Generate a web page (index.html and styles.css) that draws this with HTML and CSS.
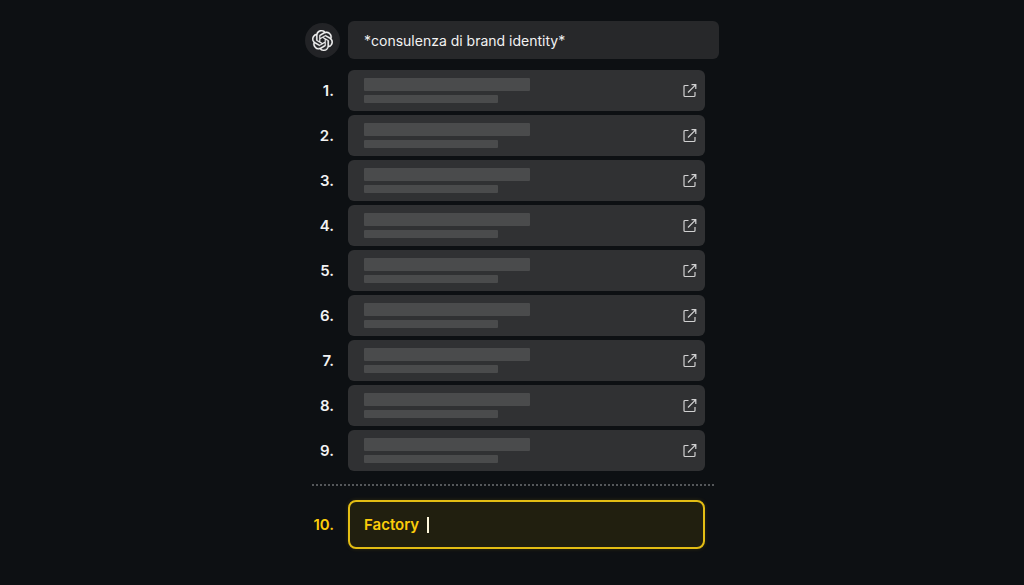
FILE: index.html
```
<!DOCTYPE html>
<html lang="it">
<head>
    <meta charset="UTF-8">
    <meta name="viewport" content="width=device-width, initial-scale=1.0">
    <title>Brand ranking</title>
    <link rel="stylesheet" href="styles.css">
</head>
<body>
    <!-- Shared icons -->
    <svg class="icon-defs" aria-hidden="true">
        <symbol id="icon-open" viewBox="0 0 14 14">
            <path d="M5.5 1.5H2Q1 1.5 1 2.5V11.5Q1 12.5 2 12.5H11Q12 12.5 12 11.5V8M8.5 .7H12.8V5M12.8 .7L5 8.5" fill="none" stroke="currentColor" stroke-width="1.2"/>
        </symbol>
    </svg>

    <main class="container">
        <!-- Search query -->
        <div class="search">
            <div class="logo">
                <svg viewBox="0 0 24 24" role="img" aria-label="ChatGPT">
                    <path fill="currentColor" stroke="currentColor" stroke-width="0.3" d="M22.2819 9.8211a5.9847 5.9847 0 0 0-.5157-4.9108 6.0462 6.0462 0 0 0-6.5098-2.9A6.0651 6.0651 0 0 0 4.9807 4.1818a5.9847 5.9847 0 0 0-3.9977 2.9 6.0462 6.0462 0 0 0 .7427 7.0966 5.98 5.98 0 0 0 .511 4.9107 6.051 6.051 0 0 0 6.5146 2.9001A5.9847 5.9847 0 0 0 13.2599 24a6.0557 6.0557 0 0 0 5.7718-4.2058 5.9894 5.9894 0 0 0 3.9977-2.9001 6.0557 6.0557 0 0 0-.7475-7.073zm-9.022 12.6081a4.4755 4.4755 0 0 1-2.8764-1.0408l.1419-.0804 4.7783-2.7582a.7948.7948 0 0 0 .3927-.6813v-6.7369l2.02 1.1686a.071.071 0 0 1 .038.052v5.5826a4.504 4.504 0 0 1-4.4945 4.4944zm-9.6607-4.1254a4.4708 4.4708 0 0 1-.5346-3.0137l.142.0852 4.783 2.7582a.7712.7712 0 0 0 .7806 0l5.8428-3.3685v2.3324a.0804.0804 0 0 1-.0332.0615L9.74 19.9502a4.4992 4.4992 0 0 1-6.1408-1.6464zM2.3408 7.8956a4.485 4.485 0 0 1 2.3655-1.9728V11.6a.7664.7664 0 0 0 .3879.6765l5.8144 3.3543-2.0201 1.1685a.0757.0757 0 0 1-.071 0l-4.8303-2.7865A4.504 4.504 0 0 1 2.3408 7.872zm16.5963 3.8558L13.1038 8.364 15.1192 7.2a.0757.0757 0 0 1 .071 0l4.8303 2.7913a4.4944 4.4944 0 0 1-.6765 8.1042v-5.6772a.79.79 0 0 0-.407-.667zm2.0107-3.0231l-.142-.0852-4.7735-2.7818a.7759.7759 0 0 0-.7854 0L9.409 9.2297V6.8974a.0662.0662 0 0 1 .0284-.0615l4.8303-2.7866a4.4992 4.4992 0 0 1 6.6802 4.66zM8.3065 12.863l-2.02-1.1638a.0804.0804 0 0 1-.038-.0567V6.0742a4.4992 4.4992 0 0 1 7.3757-3.4537l-.142.0805L8.704 5.459a.7948.7948 0 0 0-.3927.6813zm1.0976-2.3654l2.602-1.4998 2.6069 1.4998v2.9994l-2.5974 1.4997-2.6067-1.4997Z"/>
                </svg>
            </div>
            <input class="query" type="text" value="*consulenza di brand identity*" aria-label="Ricerca">
        </div>

        <!-- Results -->
        <ol class="results" id="results"></ol>

        <!-- Highlighted brand -->
        <div class="row featured">
            <span class="number">10.</span>
            <div class="brand">Factory<span class="caret"></span></div>
        </div>
    </main>

    <script>
        const results = document.getElementById("results");

        for (let i = 1; i <= 9; i++) {
            const row = document.createElement("li");
            row.className = "row";
            row.innerHTML = `
                <span class="number">${i}.</span>
                <div class="card">
                    <div class="lines">
                        <div class="line title"></div>
                        <div class="line subtitle"></div>
                    </div>
                    <a class="open" href="#" aria-label="Apri risultato ${i}">
                        <svg><use href="#icon-open"></use></svg>
                    </a>
                </div>
            `;
            results.appendChild(row);
        }
    </script>
</body>
</html>
```

FILE: styles.css
```
/* General styles */
* {
    box-sizing: border-box;
}
body {
    font-family: Inter, "Liberation Sans", sans-serif;
    font-size: 15px;
    background-color: #0d1013;
    color: #f2f2f2;
    margin: 0;
}
.icon-defs {
    display: none;
}
.container {
    max-width: 414px;
    margin: 0 auto;
    padding: 21px 0;
}

/* Search query */
.search {
    display: flex;
    align-items: center;
    gap: 8px;
}
.logo {
    display: flex;
    align-items: center;
    justify-content: center;
    width: 35px;
    height: 35px;
    border-radius: 50%;
    background-color: #222326;
}
.logo svg {
    width: 21px;
    height: 21px;
}
.query {
    flex: 1;
    min-width: 0;
    height: 38px;
    padding: 0 16px;
    border: none;
    border-radius: 6px;
    background-color: #27282a;
    color: inherit;
    font-family: inherit;
    font-size: 14px;
}

/* Results */
.results {
    display: flex;
    flex-direction: column;
    gap: 4px;
    list-style: none;
    margin: 0;
    padding: 11px 0 13px;
}
.row {
    display: grid;
    grid-template-columns: 29px 1fr;
    column-gap: 14px;
    align-items: center;
    padding-right: 14px;
}
.number {
    font-weight: 600;
    text-align: right;
    white-space: nowrap;
}
.card {
    display: flex;
    align-items: center;
    justify-content: space-between;
    height: 41px;
    padding: 0 8px 0 16px;
    border-radius: 6px;
    background-color: #303133;
}
.lines {
    flex: 1;
}
.line {
    border-radius: 1px;
    background-color: #4a4b4c;
}
.title {
    width: 52%;
    height: 13px;
    margin-bottom: 4px;
}
.subtitle {
    width: 42%;
    height: 8px;
}
.open {
    display: flex;
    color: #d0d0d1;
}
.open svg {
    width: 14px;
    height: 14px;
}

/* Highlighted brand */
.featured {
    position: relative;
    padding-top: 16px;
    color: #fccc0a;
}
.featured::before {
    content: "";
    position: absolute;
    top: 0;
    left: 7px;
    right: 3px;
    height: 2px;
    background: repeating-linear-gradient(to right, #54575a 0 2px, transparent 2px 4px);
}
.brand {
    display: flex;
    align-items: center;
    gap: 8px;
    height: 49px;
    padding: 0 14px;
    border: 2px solid #e3bd14;
    border-radius: 8px;
    background-color: #211f0f;
    box-shadow: 0 0 4px rgba(252, 204, 10, 0.15);
    font-weight: 600;
}
.caret {
    width: 2px;
    height: 16px;
    background-color: #fff8dc;
}
```
